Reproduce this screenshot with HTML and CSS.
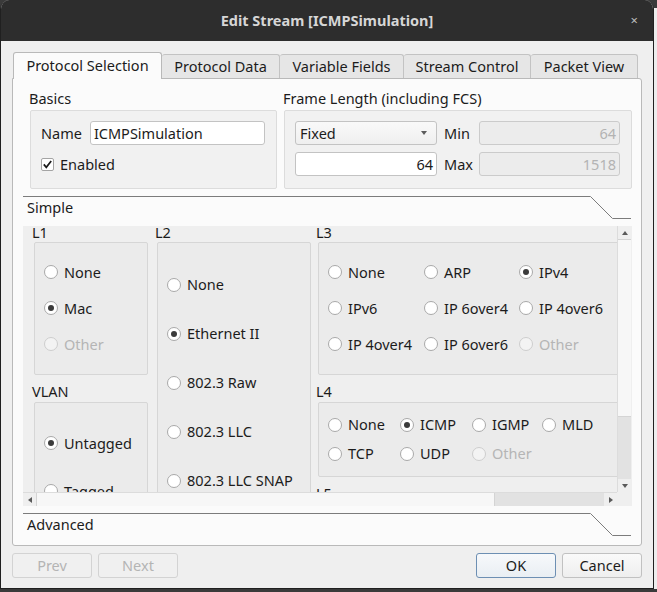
FILE: index.html
```html
<!DOCTYPE html>
<html>
<head>
<meta charset="utf-8">
<title>Edit Stream</title>
<link rel="stylesheet" href="styles.css">
</head>
<body>
<div class="screen">
  <div class="window">
    <div class="titlebar">
      <span></span>
      <span class="title">Edit Stream [ICMPSimulation]</span>
      <span class="close">×</span>
    </div>
    <div class="dialog">
      <div class="tabs">
        <div class="tab active t-sel">Protocol Selection</div>
        <div class="tab t-data">Protocol Data</div>
        <div class="tab t-var">Variable Fields</div>
        <div class="tab t-ctl">Stream Control</div>
        <div class="tab t-view">Packet View</div>
      </div>
      <div class="pane">
        <div class="top-row">
          <section class="group basics">
            <div class="group-title">Basics</div>
            <div class="group-box basics-box">
              <span class="lbl">Name</span>
              <div class="input">ICMPSimulation</div>
              <label class="check"><span class="cb"><svg width="13" height="13" viewBox="0 0 13 13"><path d="M2.8 6.4L5.3 9.3L10.2 3" fill="none" stroke="#1a1a1a" stroke-width="1.7"/></svg></span>Enabled</label>
            </div>
          </section>
          <section class="group frame">
            <div class="group-title">Frame Length (including FCS)</div>
            <div class="group-box frame-box">
              <div class="combo"><span>Fixed</span><span class="arrow"></span></div>
              <span class="lbl">Min</span>
              <div class="input num disabled">64</div>
              <div class="input num">64</div>
              <span class="lbl">Max</span>
              <div class="input num disabled">1518</div>
            </div>
          </section>
        </div>

        <div class="toolbox">
          <div class="tb-head">
            <span class="tb-text">Simple</span>
            <svg class="tb-line" width="608" height="23" viewBox="0 0 608 23"><path d="M0 0.5H567.5L589.5 22.5H608"/></svg>
          </div>

          <div class="scrollarea">
            <div class="viewport">
              <div class="content">
                <div class="col c1">
                  <div class="ctitle">L1</div>
                  <div class="cbox l1">
                    <label class="radio"><span class="rb"></span>None</label>
                    <label class="radio on"><span class="rb"></span>Mac</label>
                    <label class="radio off"><span class="rb"></span>Other</label>
                  </div>
                  <div class="ctitle next">VLAN</div>
                  <div class="cbox vlan">
                    <label class="radio on"><span class="rb"></span>Untagged</label>
                    <label class="radio"><span class="rb"></span>Tagged</label>
                  </div>
                </div>
                <div class="col c2">
                  <div class="ctitle">L2</div>
                  <div class="cbox l2">
                    <label class="radio"><span class="rb"></span>None</label>
                    <label class="radio on"><span class="rb"></span>Ethernet II</label>
                    <label class="radio"><span class="rb"></span>802.3 Raw</label>
                    <label class="radio"><span class="rb"></span>802.3 LLC</label>
                    <label class="radio"><span class="rb"></span>802.3 LLC SNAP</label>
                  </div>
                </div>
                <div class="col c3">
                  <div class="ctitle">L3</div>
                  <div class="cbox l3">
                    <label class="radio"><span class="rb"></span>None</label>
                    <label class="radio"><span class="rb"></span>ARP</label>
                    <label class="radio on"><span class="rb"></span>IPv4</label>
                    <label class="radio"><span class="rb"></span>IPv6</label>
                    <label class="radio"><span class="rb"></span>IP 6over4</label>
                    <label class="radio"><span class="rb"></span>IP 4over6</label>
                    <label class="radio"><span class="rb"></span>IP 4over4</label>
                    <label class="radio"><span class="rb"></span>IP 6over6</label>
                    <label class="radio off"><span class="rb"></span>Other</label>
                  </div>
                  <div class="ctitle next">L4</div>
                  <div class="cbox l4">
                    <label class="radio"><span class="rb"></span>None</label>
                    <label class="radio on"><span class="rb"></span>ICMP</label>
                    <label class="radio"><span class="rb"></span>IGMP</label>
                    <label class="radio"><span class="rb"></span>MLD</label>
                    <label class="radio"><span class="rb"></span>TCP</label>
                    <label class="radio"><span class="rb"></span>UDP</label>
                    <label class="radio off"><span class="rb"></span>Other</label>
                  </div>
                  <div class="ctitle next">L5</div>
                </div>
              </div>
            </div>
            <div class="vscroll">
              <div class="sb-btn"><span class="tri up"></span></div>
              <div class="sb-handle"></div>
              <div class="sb-trough"></div>
              <div class="sb-btn"><span class="tri down"></span></div>
            </div>
            <div class="hscroll">
              <div class="sb-btn"><span class="tri left"></span></div>
              <div class="sb-handle"></div>
              <div class="sb-trough"></div>
              <div class="sb-btn"><span class="tri right"></span></div>
            </div>
            <div class="corner"></div>
          </div>

          <div class="tb-head adv">
            <span class="tb-text">Advanced</span>
            <svg class="tb-line" width="608" height="23" viewBox="0 0 608 23"><path d="M0 0.5H567.5L589.5 22.5H608"/></svg>
          </div>
        </div>
      </div>

      <div class="buttons">
        <button class="btn" disabled>Prev</button>
        <button class="btn" disabled>Next</button>
        <span class="spacer"></span>
        <button class="btn default">OK</button>
        <button class="btn">Cancel</button>
      </div>
    </div>
  </div>
  <div class="behind"></div>
</div>
</body>
</html>
```

FILE: styles.css
```css
* { box-sizing: border-box; }
html, body { margin: 0; padding: 0; }
body {
  width: 657px;
  height: 592px;
  overflow: hidden;
  background: #3a3a3a;
  font-family: "Noto Sans", "DejaVu Sans", sans-serif;
  font-size: 14.5px;
  line-height: 17px;
  color: #1c1c1c;
}
.screen { display: flex; align-items: flex-start; }

.window {
  width: 654px;
  height: 589px;
  display: flex;
  flex-direction: column;
  background: #efefef;
  border: 1px solid #202020;
  border-top: none;
  border-radius: 9px 9px 0 0;
  overflow: hidden;
}
.behind {
  width: 3px;
  height: 581px;
  margin-top: 8px;
  background: #ededed;
}

/* title bar */
.titlebar {
  height: 41px;
  flex: none;
  display: grid;
  grid-template-columns: 1fr auto 1fr;
  align-items: center;
  background: #2d2d2d;
}
.title {
  font-weight: bold;
  font-size: 14.5px;
  color: #d6d6d6;
}
.close {
  justify-self: end;
  margin-right: 15px;
  color: #bdbdbd;
  font-size: 13px;
}

/* dialog body */
.dialog {
  flex: 1;
  display: flex;
  flex-direction: column;
  padding: 11px 11px 0 11px;
}

.tabs {
  display: flex;
  align-items: flex-end;
  height: 27px;
  padding-left: 1px;
  margin-bottom: -1px;
  position: relative;
  z-index: 1;
}
.tab {
  height: 24px;
  margin-bottom: 1px;
  display: flex;
  align-items: center;
  justify-content: center;
  background: #e6e6e6;
  border: 1px solid #c3c3c3;
  border-bottom: none;
  border-left: none;
  border-radius: 3px 3px 0 0;
  white-space: nowrap;
}
.tab.active {
  height: 27px;
  margin-bottom: 0;
  padding-bottom: 2px;
  background: #fbfbfb;
  border-left: 1px solid #b9b9b9;
  border-color: #b9b9b9;
}
.t-sel { width: 149px; }
.t-data { width: 118px; }
.t-var { width: 124px; }
.t-ctl { width: 127px; }
.t-view { width: 107px; }

.pane {
  height: 468px;
  flex: none;
  background: #fbfbfb;
  border: 1px solid #b9b9b9;
  border-radius: 0 3px 3px 3px;
  padding: 11px 9px 9px 10px;
  display: flex;
  flex-direction: column;
}

/* top row */
.top-row {
  display: flex;
  gap: 7px;
  padding-left: 7px;
}
.group-title {
  height: 17px;
  margin-left: -1px;
  margin-bottom: 3px;
  white-space: nowrap;
}
.group-box {
  height: 79px;
  background: #f1f1f1;
  border: 1px solid #dcdcdc;
  border-radius: 2px;
  padding: 10px 12px 10px 10px;
  display: grid;
  grid-auto-rows: 24px;
  row-gap: 7px;
  align-items: center;
}
.basics { width: 247px; }
.basics-box {
  grid-template-columns: auto 175px;
  column-gap: 8px;
}
.frame { width: 348px; }
.frame-box {
  padding-right: 11px;
  grid-template-columns: 142px 28px 141px;
  column-gap: 7px;
}
.lbl { white-space: nowrap; }

.input {
  height: 24px;
  background: #ffffff;
  border: 1px solid #c3c3c3;
  border-radius: 3px;
  padding: 0 4px 0 3px;
  display: flex;
  align-items: center;
  white-space: nowrap;
}
.input.num { justify-content: flex-end; padding-right: 3px; }
.input.disabled {
  background: #ececec;
  border-color: #cbcbcb;
  color: #b3b3b3;
}

.combo {
  height: 24px;
  border: 1px solid #c3c3c3;
  border-radius: 3px;
  background: linear-gradient(#f9f9f9, #efefef);
  padding: 0 9px 0 4px;
  display: flex;
  align-items: center;
  justify-content: space-between;
}
.arrow {
  width: 0;
  height: 0;
  border-left: 3.5px solid transparent;
  border-right: 3.5px solid transparent;
  border-top: 4px solid #5c5c5c;
}

.check {
  grid-column: 1 / 3;
  display: flex;
  align-items: center;
  gap: 6px;
}
.cb {
  width: 13px;
  height: 13px;
  flex: none;
  background: #fff;
  border: 1px solid #a4a4a4;
  border-radius: 2px;
  display: flex;
  align-items: center;
  justify-content: center;
}
.cb svg { display: block; flex: none; }

/* toolbox */
.toolbox {
  margin-top: 7px;
  display: flex;
  flex-direction: column;
}
.tb-head {
  height: 23px;
  position: relative;
  padding: 3px 0 0 4px;
}
.tb-head.adv { margin-top: 7px; }
.tb-text { position: relative; z-index: 1; }
.tb-line {
  position: absolute;
  left: 0;
  top: 0;
  display: block;
}
.tb-line path {
  fill: none;
  stroke: #7c7c7c;
  stroke-width: 1;
}

.scrollarea {
  margin-top: 7px;
  height: 280px;
  display: grid;
  grid-template-columns: 594px 14px;
  grid-template-rows: 266px 14px;
  background: #efefef;
}
.viewport {
  overflow: hidden;
  background: #efefef;
}
.content {
  display: flex;
  align-items: flex-start;
  width: 720px;
  padding-left: 11px;
}
.col { display: flex; flex-direction: column; }
.c1 { width: 114px; }
.c2 { width: 154px; margin-left: 9px; }
.c3 { width: 330px; margin-left: 7px; }
.ctitle {
  height: 12px;
  line-height: 12px;
  margin-left: -2px;
  margin-bottom: 4px;
}
.ctitle.next { margin-top: 10px; margin-bottom: 5px; }
.cbox {
  background: #ebebeb;
  border: 1px solid #d6d6d6;
  border-radius: 2px;
}
.l1 {
  height: 133px;
  padding: 11px 0 0 9px;
  display: grid;
  grid-auto-rows: 36px;
}
.vlan {
  height: 140px;
  padding: 16px 0 0 9px;
  display: grid;
  grid-auto-rows: 48px;
}
.l2 {
  height: 300px;
  padding: 17px 0 0 9px;
  display: grid;
  grid-auto-rows: 49px;
}
.l3 {
  height: 133px;
  padding: 11px 0 0 9px;
  display: grid;
  grid-template-columns: 96px 95px auto;
  grid-auto-rows: 36px;
}
.l4 {
  height: 75px;
  padding: 7px 0 0 9px;
  display: grid;
  grid-template-columns: 72px 72px 70px auto;
  grid-auto-rows: 29px;
}

.radio {
  display: flex;
  align-items: center;
  white-space: nowrap;
}
.rb {
  width: 14px;
  height: 14px;
  flex: none;
  margin-right: 6px;
  border-radius: 50%;
  background: #ffffff;
  border: 1px solid #a9a9a9;
  display: flex;
  align-items: center;
  justify-content: center;
}
.radio.on .rb::after {
  content: "";
  width: 6px;
  height: 6px;
  border-radius: 50%;
  background: #3b3b3b;
}
.radio.off { color: #b5b5b5; }
.radio.off .rb { border-color: #cdcdcd; background: #f3f3f3; }

/* scrollbars */
.vscroll {
  display: flex;
  flex-direction: column;
  background: #efefef;
  border-left: 1px solid #dcdcdc;
}
.hscroll {
  display: flex;
  background: #efefef;
  border-top: 1px solid #dcdcdc;
}
.sb-btn {
  flex: none;
  width: 13px;
  height: 13px;
  display: flex;
  align-items: center;
  justify-content: center;
}
.vscroll .sb-handle {
  height: 178px;
  flex: none;
  background: #f7f7f7;
  border-top: 1px solid #d4d4d4;
  border-bottom: 1px solid #d4d4d4;
}
.vscroll .sb-trough { flex: 1; background: #e2e2e2; }
.hscroll .sb-handle {
  width: 459px;
  flex: none;
  background: #f7f7f7;
  border-left: 1px solid #d4d4d4;
  border-right: 1px solid #d4d4d4;
}
.hscroll .sb-trough { flex: 1; background: #e2e2e2; }
.corner { background: #efefef; }
.tri { width: 0; height: 0; }
.tri.up { border-left: 3.5px solid transparent; border-right: 3.5px solid transparent; border-bottom: 4px solid #5a5a5a; }
.tri.down { border-left: 3.5px solid transparent; border-right: 3.5px solid transparent; border-top: 4px solid #5a5a5a; }
.tri.left { border-top: 3.5px solid transparent; border-bottom: 3.5px solid transparent; border-right: 4px solid #5a5a5a; }
.tri.right { border-top: 3.5px solid transparent; border-bottom: 3.5px solid transparent; border-left: 4px solid #5a5a5a; }

/* buttons */
.buttons {
  display: flex;
  gap: 6px;
  margin-top: 7px;
}
.spacer { flex: 1; }
.btn {
  width: 80px;
  height: 25px;
  font: inherit;
  color: #1c1c1c;
  background: linear-gradient(#fafafa, #eeeeee);
  border: 1px solid #c1c1c1;
  border-radius: 3px;
  padding: 0;
}
.btn:disabled {
  color: #b4b4b4;
  background: #f0f0f0;
  border-color: #d3d3d3;
}
.btn.default {
  border-color: #6d8fb3;
  background: linear-gradient(#f7f9fb, #e9eef3);
}
```
